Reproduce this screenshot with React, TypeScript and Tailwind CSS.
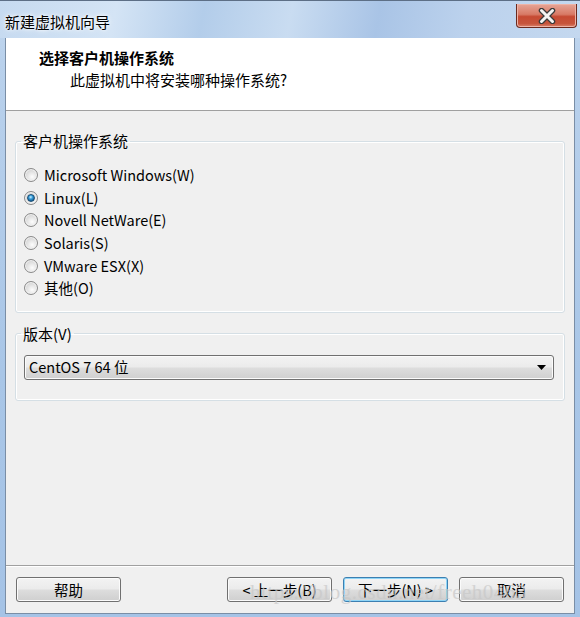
import React from "react";

const font = { fontFamily: '"Noto Sans CJK SC", "Noto Sans", sans-serif' };

function Radio({ checked }: { checked?: boolean }) {
  return (
    <span className="flex h-[14px] w-[14px] shrink-0 items-center justify-center rounded-full border border-[#8a8a8a] bg-[radial-gradient(circle_at_60%_65%,#fdfdfd_0%,#e6e6e6_40%,#c4c4c4_100%)] shadow-[inset_0_0_0_1px_#f2f2f2]">
      {checked && (
        <span className="h-[8px] w-[8px] rounded-full border border-[#1b4e74] bg-[radial-gradient(circle_at_45%_35%,#d0f3ff_0%,#3ba0dc_35%,#145d94_75%,#0c3c63_100%)]" />
      )}
    </span>
  );
}

function RadioRow({ label, checked }: { label: string; checked?: boolean }) {
  return (
    <div className="flex h-[22.6px] items-center gap-[6px] pl-[8px]">
      <Radio checked={checked} />
      <span className="text-[14.5px] leading-[20px] text-black">{label}</span>
    </div>
  );
}

function WinButton({ children, isDefault }: { children: React.ReactNode; isDefault?: boolean }) {
  return (
    <div
      className={
        "flex h-[25px] w-[105px] items-center justify-center rounded-[3px] border text-[14.5px] leading-[20px] text-black bg-[linear-gradient(to_bottom,#f3f3f3_0%,#ebebeb_48%,#dddddd_52%,#cfcfcf_100%)] " +
        (isDefault
          ? "border-[#3c7fb1] shadow-[inset_0_0_0_1px_#8fd5f7]"
          : "border-[#707070] shadow-[inset_0_0_0_1px_#fbfbfb]")
      }
    >
      {children}
    </div>
  );
}

function CloseButton() {
  return (
    <div className="mr-[3px] mt-[3px] flex h-[24px] w-[61px] items-center justify-center rounded-b-[4px] border border-t-0 border-[#6b2a1e] bg-[linear-gradient(to_bottom,#e6a597_0%,#d87a66_45%,#c64a33_55%,#c7553c_85%,#d9836c_100%)] shadow-[inset_0_0_0_1px_#eeb3a6]">
      <svg width="22" height="16" viewBox="0 0 22 16">
        <path d="M5.5 2.5 L16.5 13.5 M16.5 2.5 L5.5 13.5" fill="none" stroke="#3b3b3b" strokeWidth="5.5" strokeLinecap="round" />
        <path d="M5.5 2.5 L16.5 13.5 M16.5 2.5 L5.5 13.5" fill="none" stroke="#f4f4f4" strokeWidth="3" strokeLinecap="round" />
      </svg>
    </div>
  );
}

export default function App() {
  return (
    <div
      className="relative flex h-[617px] w-[580px] flex-col overflow-hidden bg-[linear-gradient(to_bottom,#c3d8ef_0%,#b9d1ec_10%,#a9c6e7_60%,#a5c3e6_100%)]"
      style={font}
    >
      {/* title bar */}
      <div className="flex h-[38px] shrink-0 items-start justify-between border-t border-[#5d6f86] bg-[linear-gradient(100deg,#c6daf0_0%,#d4e4f5_20%,#b3cdea_35%,#c9dcf1_50%,#a9c4e6_65%,#bcd2ed_80%,#c4d8ef_100%)]">
        <div className="pl-[5px] pt-[11px] text-[15px] leading-[20px] text-black [text-shadow:0_0_6px_#ffffff,0_0_3px_#ffffff]">
          新建虚拟机向导
        </div>
        <CloseButton />
      </div>

      {/* client area */}
      <div className="ml-[5px] flex h-[576px] w-[570px] flex-col border-x border-b border-[#7a8ea6] bg-[#f0f0f0]">
        {/* header */}
        <div className="h-[73px] shrink-0 border-b border-[#a0a0a0] bg-white">
          <div className="pl-[33px] pt-[10px] text-[15px] font-bold leading-[20px] text-black">选择客户机操作系统</div>
          <div className="pl-[64px] pt-[2px] text-[15px] leading-[20px] text-black">此虚拟机中将安装哪种操作系统?</div>
        </div>

        {/* body */}
        <div className="flex flex-1 flex-col gap-[11px] px-[9px] pt-[20px]">
          <fieldset className="rounded-[3px] border border-[#d5dfe5] pb-[12px] pt-[13px] shadow-[inset_0_0_0_1px_#ffffff]">
            <legend className="ml-[5px] px-[2px] text-[15px] leading-[20px] text-black">客户机操作系统</legend>
            <RadioRow label="Microsoft Windows(W)" />
            <RadioRow label="Linux(L)" checked />
            <RadioRow label="Novell NetWare(E)" />
            <RadioRow label="Solaris(S)" />
            <RadioRow label="VMware ESX(X)" />
            <RadioRow label="其他(O)" />
          </fieldset>

          <fieldset className="rounded-[3px] border border-[#d5dfe5] pb-[20px] pt-[11px] shadow-[inset_0_0_0_1px_#ffffff]">
            <legend className="ml-[5px] px-[2px] text-[15px] leading-[20px] text-black">版本(V)</legend>
            <div className="ml-[8px] mr-[10px] flex h-[25px] items-center justify-between rounded-[3px] border border-[#707070] bg-[linear-gradient(to_bottom,#f3f3f3_0%,#ebebeb_48%,#dddddd_52%,#cfcfcf_100%)] pl-[4px] pr-[7px] shadow-[inset_0_0_0_1px_#fbfbfb]">
              <span className="text-[14.5px] leading-[20px] text-black">CentOS 7 64 位</span>
              <svg width="9" height="5" viewBox="0 0 9 5">
                <path d="M0 0 H9 L4.5 5 Z" fill="#000" />
              </svg>
            </div>
          </fieldset>
        </div>

        {/* footer */}
        <div className="flex h-[48px] shrink-0 items-center justify-between border-t border-[#a0a0a0] px-[10px] shadow-[inset_0_1px_0_#ffffff]">
          <WinButton>帮助</WinButton>
          <div className="flex gap-[11px]">
            <WinButton>&lt; 上一步(B)</WinButton>
            <WinButton isDefault>下一步(N) &gt;</WinButton>
            <WinButton>取消</WinButton>
          </div>
        </div>
      </div>

      {/* watermark */}
      <div
        className="pointer-events-none absolute left-[250px] top-[578px] text-[21px] leading-[28px] tracking-[0.5px] text-[#c8c8c8] opacity-70"
        style={{ fontFamily: '"Liberation Serif", serif' }}
      >
        https://blog.csdn.net/freeh0463
      </div>
    </div>
  );
}
